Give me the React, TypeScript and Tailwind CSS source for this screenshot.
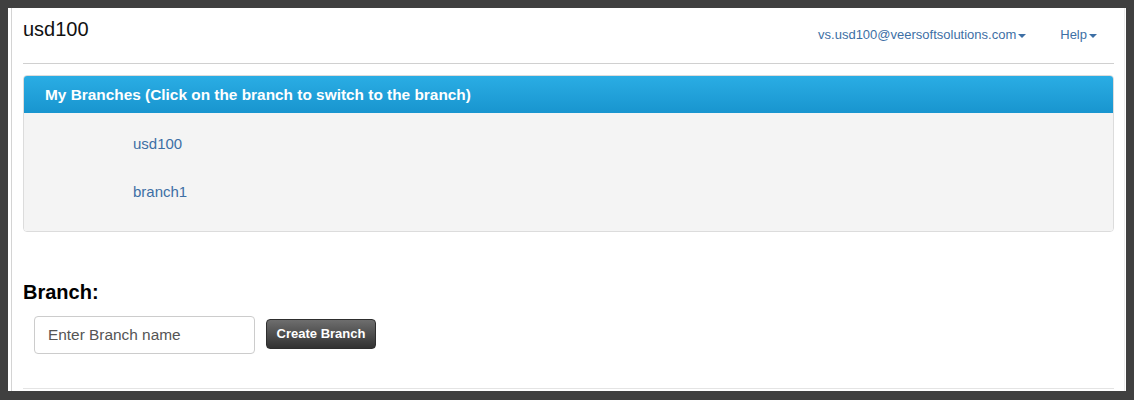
import React from "react";

const branches = ["usd100", "branch1"];

function Caret() {
  return (
    <span className="ml-[2px] inline-block h-0 w-0 border-x-[4px] border-t-[4px] border-x-transparent border-t-[#3d6fa5] align-middle" />
  );
}

export default function App() {
  return (
    <div
      className="h-[400px] w-[1134px] bg-[#404040] pb-[9px] pl-[8px] pr-[8px] pt-[8px]"
      style={{ fontFamily: '"Liberation Sans", Arial, sans-serif' }}
    >
      <div className="flex h-full overflow-hidden bg-white pl-[3px] pr-[1px]">
        <div className="flex flex-1 flex-col border-l border-[#d4d4d4] pl-[11px] pr-[10px] border-r border-r-[#ececec]">
          {/* Header */}
          <div className="flex h-[55px] shrink-0 items-start justify-between">
            <div className="pt-[10px] text-[20px] leading-[22px] text-[#111]">usd100</div>
            <div className="flex gap-[34px] pr-[17px] pt-[18px] text-[13px] leading-[18px] text-[#3d6fa5]">
              <span>
                vs.usd100@veersoftsolutions.com
                <Caret />
              </span>
              <span>
                Help
                <Caret />
              </span>
            </div>
          </div>
          <div className="shrink-0 border-t border-[#d0d0d0]" />

          {/* My Branches panel */}
          <div className="mt-[11px] shrink-0 overflow-hidden rounded-[4px] border border-[#dcdcdc]">
            <div className="flex h-[37px] items-center bg-gradient-to-b from-[#2aade4] to-[#1895cf] pl-[21px] text-[15.4px] font-bold text-white">
              My Branches (Click on the branch to switch to the branch)
            </div>
            <div className="flex flex-col gap-[24px] bg-[#f4f4f4] pb-[27px] pl-[109px] pt-[19px]">
              {branches.map((b) => (
                <a key={b} className="h-[24px] text-[15px] leading-[24px] text-[#3d6fa5]">
                  {b}
                </a>
              ))}
            </div>
          </div>

          {/* Create branch */}
          <div className="mt-[49px] text-[20px] font-bold leading-[22px] text-black">Branch:</div>
          <div className="ml-[11px] mt-[13px] flex items-center gap-[11px]">
            <input
              placeholder="Enter Branch name"
              className="h-[38px] w-[221px] rounded-[4px] border border-[#cccccc] px-[13px] text-[15.4px] text-[#555] placeholder:text-[#555] outline-none"
            />
            <button className="mt-[-3px] h-[30px] w-[110px] rounded-[4px] border border-[#2e2e2e] bg-gradient-to-b from-[#6e6e6e] to-[#323232] text-[13px] font-bold text-white">
              Create Branch
            </button>
          </div>
          <div className="mt-[34px] shrink-0 border-t border-[#e4e4e4]" />
        </div>
      </div>
    </div>
  );
}
